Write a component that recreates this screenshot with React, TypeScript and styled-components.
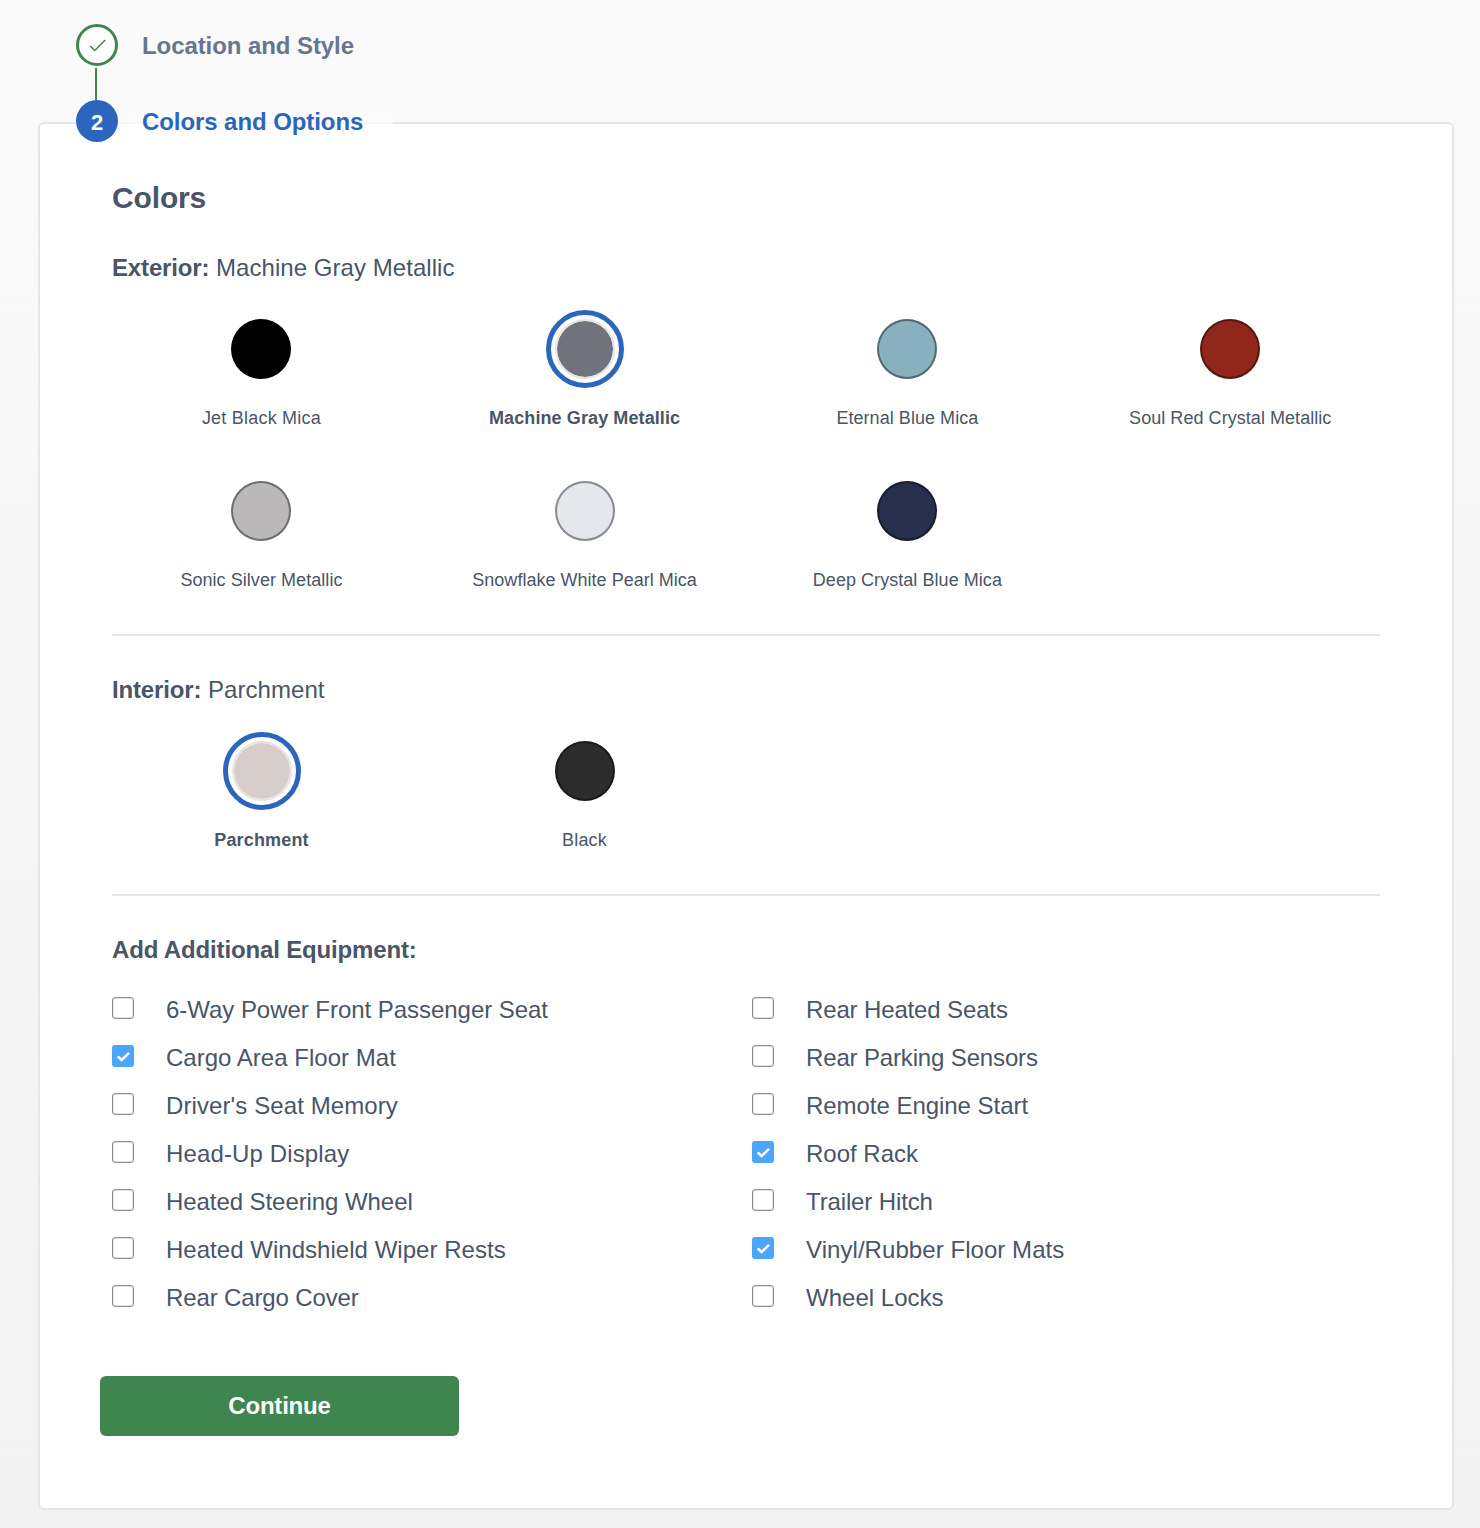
import React, { useState } from 'react';
import styled, { createGlobalStyle, css } from 'styled-components';

const GlobalStyle = createGlobalStyle`
  *, *::before, *::after { box-sizing: border-box; }
  body {
    margin: 0;
    color: #4a5568;
    font-family: "Liberation Sans", Arial, sans-serif;
    font-size: 24px;
  }
`;

const Page = styled.main`
  width: 1480px;
  height: 1528px;
  padding: 24px 26px 0 38px;
  background: linear-gradient(#fafafa, #f2f2f2);
`;

const Step = styled.div<{ $active?: boolean }>`
  display: flex;
  align-items: center;
  width: max-content;
  height: 42px;
  margin-left: 38px;
  padding-right: 30px;
  color: ${(p) => (p.$active ? '#2b66bc' : '#68758d')};
  ${(p) =>
    p.$active &&
    css`
      position: relative;
      z-index: 1;
      background: linear-gradient(rgba(255, 255, 255, 0) 20%, rgba(255, 255, 255, 0.6) 56%, #fff 62%);
    `}
`;

const StepMarker = styled.span<{ $active?: boolean }>`
  display: flex;
  align-items: center;
  justify-content: center;
  width: 42px;
  height: 42px;
  padding-top: ${(p) => (p.$active ? '4px' : '0')};
  border-radius: 50%;
  border: ${(p) => (p.$active ? '0' : '3px solid #3f8550')};
  background: ${(p) => (p.$active ? '#2b66bc' : '#fff')};
  color: ${(p) => (p.$active ? '#fff' : '#3f8550')};
  font-size: 22px;
  font-weight: 700;
`;

const StepTitle = styled.span`
  margin-left: 24px;
  padding-top: 1px;
  font-weight: 700;
  line-height: 28px;
  letter-spacing: -0.08px;
`;

const Connector = styled.div`
  width: 2px;
  height: 32px;
  margin: 2px 0 0 57px;
  background: #3f8550;
`;

const Panel = styled.section`
  width: 1416px;
  height: 1388px;
  margin-top: -20px;
  padding: 56px 60px 0;
  border: 2px solid #e5e5e5;
  border-radius: 6px;
  background: #fff;
`;

const Heading = styled.h2`
  margin: 0 12px;
  font-size: 30px;
  line-height: 36px;
  letter-spacing: -0.15px;
`;

const Subheading = styled.h3<{ $top: number }>`
  margin: ${(p) => p.$top}px 12px 0;
  font-size: 24px;
  font-weight: 400;
  line-height: 36px;
  letter-spacing: 0.05px;

  b {
    letter-spacing: -0.15px;
  }
`;

const Swatches = styled.div<{ $columns: string }>`
  display: grid;
  grid-template-columns: ${(p) => p.$columns};
  row-gap: 32px;
  margin-top: 24px;
`;

const SwatchButton = styled.button`
  display: flex;
  flex-direction: column;
  align-items: center;
  height: 130px;
  padding: 0;
  border: 0;
  background: none;
  color: inherit;
  font: inherit;
  cursor: pointer;
`;

const Ring = styled.span<{ $selected: boolean }>`
  width: ${(p) => (p.$selected ? 78 : 60)}px;
  height: ${(p) => (p.$selected ? 78 : 60)}px;
  margin: ${(p) => (p.$selected ? 0 : 9)}px 0;
  padding: ${(p) => (p.$selected ? 4 : 0)}px;
  border: ${(p) => (p.$selected ? '5px solid #2b66bc' : '0')};
  border-radius: 50%;
`;

const Dot = styled.span<{ $color: string; $selected: boolean }>`
  display: block;
  width: 60px;
  height: 60px;
  border: 2px solid ${(p) => (p.$selected ? '#e5e5e5' : 'rgba(0, 0, 0, 0.4)')};
  border-radius: 50%;
  background: ${(p) => p.$color};
  background-clip: ${(p) => (p.$selected ? 'padding-box' : 'border-box')};
`;

const SwatchLabel = styled.span<{ $selected: boolean; $tracking: number }>`
  margin-top: 18px;
  font-size: 18px;
  font-weight: ${(p) => (p.$selected ? 700 : 400)};
  line-height: 24px;
  letter-spacing: ${(p) => p.$tracking}px;
  white-space: nowrap;
`;

const Divider = styled.hr`
  height: 2px;
  margin: 32px 12px 0;
  border: 0;
  background: #e5e5e5;
`;

const Equipment = styled.div`
  display: grid;
  grid-template-rows: repeat(7, 48px);
  grid-template-columns: 640px 640px;
  grid-auto-flow: column;
  margin: 18px 0 0 12px;
`;

const Option = styled.label`
  display: flex;
  align-items: flex-start;
  cursor: pointer;
`;

const HiddenInput = styled.input`
  position: absolute;
  opacity: 0;
`;

const Box = styled.span<{ $checked: boolean }>`
  display: flex;
  align-items: center;
  justify-content: center;
  width: 22px;
  height: 22px;
  margin: 11px 32px 0 0;
  border: ${(p) => (p.$checked ? '0' : '1px solid #8b8b8b')};
  border-radius: 3px;
  background: ${(p) => (p.$checked ? '#4ba5f8' : '#fff')};
  box-shadow: ${(p) => (p.$checked ? 'none' : 'inset 0 0 0 1px #e2e2e2')};
`;

const OptionText = styled.span<{ $tracking: number }>`
  padding-top: 6px;
  line-height: 36px;
  letter-spacing: ${(p) => p.$tracking}px;
`;

const Continue = styled.button`
  display: block;
  width: 359px;
  height: 60px;
  margin-top: 54px;
  padding: 0;
  border: 0;
  border-radius: 6px;
  background: #3f8550;
  color: #fff;
  font: inherit;
  font-weight: 700;
  letter-spacing: -0.2px;
  cursor: pointer;
`;

type Color = { name: string; color: string; tracking: number };

const exterior: Color[] = [
  { name: 'Jet Black Mica', color: '#000000', tracking: 0.22 },
  { name: 'Machine Gray Metallic', color: '#70737c', tracking: 0.1 },
  { name: 'Eternal Blue Mica', color: '#88b0bf', tracking: 0.05 },
  { name: 'Soul Red Crystal Metallic', color: '#90271a', tracking: 0.05 },
  { name: 'Sonic Silver Metallic', color: '#bab8b9', tracking: 0.05 },
  { name: 'Snowflake White Pearl Mica', color: '#e4e8ed', tracking: 0.02 },
  { name: 'Deep Crystal Blue Mica', color: '#272f4e', tracking: 0.05 },
];

const interior: Color[] = [
  { name: 'Parchment', color: '#d7cecb', tracking: 0.15 },
  { name: 'Black', color: '#2c2c2c', tracking: 0.15 },
];

const equipment = [
  { name: '6-Way Power Front Passenger Seat', tracking: -0.04 },
  { name: 'Cargo Area Floor Mat', tracking: 0.02 },
  { name: "Driver's Seat Memory", tracking: 0.1 },
  { name: 'Head-Up Display', tracking: 0.13 },
  { name: 'Heated Steering Wheel', tracking: -0.07 },
  { name: 'Heated Windshield Wiper Rests', tracking: 0.03 },
  { name: 'Rear Cargo Cover', tracking: -0.13 },
  { name: 'Rear Heated Seats', tracking: -0.14 },
  { name: 'Rear Parking Sensors', tracking: -0.15 },
  { name: 'Remote Engine Start', tracking: -0.04 },
  { name: 'Roof Rack', tracking: 0 },
  { name: 'Trailer Hitch', tracking: -0.13 },
  { name: 'Vinyl/Rubber Floor Mats', tracking: 0.06 },
  { name: 'Wheel Locks', tracking: 0.02 },
];

type PickerProps = {
  colors: Color[];
  value: string;
  columns: string;
  onChange: (name: string) => void;
};

function SwatchPicker({ colors, value, columns, onChange }: PickerProps) {
  return (
    <Swatches $columns={columns}>
      {colors.map(({ name, color, tracking }) => (
        <SwatchButton key={name} type="button" onClick={() => onChange(name)}>
          <Ring $selected={name === value}>
            <Dot $color={color} $selected={name === value} />
          </Ring>
          <SwatchLabel $selected={name === value} $tracking={tracking}>
            {name}
          </SwatchLabel>
        </SwatchButton>
      ))}
    </Swatches>
  );
}

export default function App() {
  const [outside, setOutside] = useState('Machine Gray Metallic');
  const [inside, setInside] = useState('Parchment');
  const [chosen, setChosen] = useState(['Cargo Area Floor Mat', 'Roof Rack', 'Vinyl/Rubber Floor Mats']);

  const toggle = (name: string) =>
    setChosen((list) => (list.includes(name) ? list.filter((n) => n !== name) : [...list, name]));

  return (
    <>
      <GlobalStyle />
      <Page>
        <Step>
          <StepMarker>
            <svg width="18" height="16" viewBox="0 0 18 16" fill="none" stroke="currentColor" strokeWidth="1.5">
              <path d="M2.2 9 6.7 13.5 17.2 3" />
            </svg>
          </StepMarker>
          <StepTitle>Location and Style</StepTitle>
        </Step>
        <Connector />
        <Step $active>
          <StepMarker $active>2</StepMarker>
          <StepTitle>Colors and Options</StepTitle>
        </Step>
        <Panel>
          <Heading>Colors</Heading>
          <Subheading $top={34}>
            <b>Exterior:</b> {outside}
          </Subheading>
          <SwatchPicker
            colors={exterior}
            value={outside}
            columns="322.9px 323.4px 322.2px 323.6px"
            onChange={setOutside}
          />
          <Divider />
          <Subheading $top={36}>
            <b>Interior:</b> {inside}
          </Subheading>
          <SwatchPicker colors={interior} value={inside} columns="repeat(4, 323px)" onChange={setInside} />
          <Divider />
          <Subheading $top={36}>
            <b>Add Additional Equipment:</b>
          </Subheading>
          <Equipment>
            {equipment.map(({ name, tracking }) => (
              <Option key={name}>
                <HiddenInput type="checkbox" checked={chosen.includes(name)} onChange={() => toggle(name)} />
                <Box $checked={chosen.includes(name)}>
                  {chosen.includes(name) && (
                    <svg width="14" height="12" viewBox="0 0 14 12" fill="none" stroke="#fff" strokeWidth="2.6">
                      <path d="M1.7 6.4 5.6 10 13 2.9" />
                    </svg>
                  )}
                </Box>
                <OptionText $tracking={tracking}>{name}</OptionText>
              </Option>
            ))}
          </Equipment>
          <Continue type="button">Continue</Continue>
        </Panel>
      </Page>
    </>
  );
}
